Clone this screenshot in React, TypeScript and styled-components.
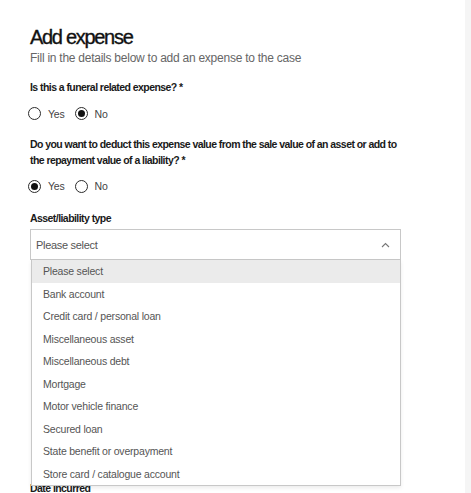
import React, { useState } from "react"
import styled, { createGlobalStyle } from "styled-components"

const GlobalStyle = createGlobalStyle`
  html, body {
    margin: 0;
    padding: 0;
    background: #ffffff;
    font-family: "Liberation Sans", Arial, sans-serif;
    color: #1a1a1a;
    overflow: hidden;
  }
`

const Page = styled.div`
  display: flex;
  width: 471px;
  height: 493px;
  overflow: hidden;
`

const Main = styled.div`
  flex: 1;
  padding: 25px 0 0 30px;
`

const Gutter = styled.div`
  width: 6px;
  background: #f5f5f5;
`

const Form = styled.div`
  width: 371px;
`

const Title = styled.h1`
  margin: 0;
  font-size: 20px;
  font-weight: 400;
  -webkit-text-stroke: 0.35px #111;
  letter-spacing: -1.3px;
  line-height: 24px;
  color: #111;
`

const Subtitle = styled.p`
  margin: 1px 0 0;
  font-size: 12px;
  line-height: 16px;
  color: #666;
  letter-spacing: -0.25px;
`

const Field = styled.div<{ $gap?: number }>`
  margin-top: ${(p) => p.$gap ?? 18}px;
`

const Label = styled.div`
  font-size: 10.5px;
  font-weight: 700;
  line-height: 15.5px;
  color: #1a1a1a;
  letter-spacing: -0.56px;
`

const RadioGroup = styled.div`
  display: flex;
  align-items: center;
  gap: 10px;
  margin-top: 11.5px;
  margin-left: -2px;
`

const RadioOption = styled.label`
  display: flex;
  align-items: center;
  gap: 7px;
  font-size: 10.5px;
  color: #444;
  letter-spacing: -0.2px;
`

const RadioCircle = styled.span<{ $checked: boolean }>`
  width: 13px;
  height: 13px;
  border-radius: 50%;
  border: 1px solid #2b2b2b;
  box-sizing: border-box;
  display: flex;
  align-items: center;
  justify-content: center;
  &::after {
    content: "";
    display: ${(p) => (p.$checked ? "block" : "none")};
    width: 7px;
    height: 7px;
    border-radius: 50%;
    background: #111;
  }
`

const SelectWrap = styled.div`
  position: relative;
  margin-top: 3px;
`

const SelectBox = styled.div`
  height: 31px;
  box-sizing: border-box;
  border: 1px solid #c8c8c8;
  display: flex;
  align-items: center;
  justify-content: space-between;
  padding: 0 10px 0 5px;
  font-size: 11px;
  color: #555;
  letter-spacing: -0.3px;
`

const Menu = styled.ul`
  position: absolute;
  top: 31px;
  left: 1px;
  right: 0;
  margin: 0;
  padding: 0;
  list-style: none;
  background: #fff;
  border: 1px solid #c8c8c8;
  border-top: none;
  box-shadow: 0 2px 4px rgba(0, 0, 0, 0.08);
  z-index: 2;
`

const MenuItem = styled.li<{ $active?: boolean }>`
  height: 22.5px;
  display: flex;
  align-items: center;
  padding-left: 11px;
  font-size: 10.5px;
  color: #555;
  letter-spacing: -0.2px;
  background: ${(p) => (p.$active ? "#ebebeb" : "transparent")};
`

const TextInput = styled.div`
  height: 30px;
  margin-top: 3px;
  border: 1px solid #c8c8c8;
  box-sizing: border-box;
`

function Chevron() {
  return (
    <svg width="9" height="6" viewBox="0 0 9 6" fill="none">
      <path d="M1 5L4.5 1.5L8 5" stroke="#777" strokeWidth="1.1" />
    </svg>
  )
}

function Radios({ value, onChange }: { value: string; onChange: (v: string) => void }) {
  return (
    <RadioGroup>
      {["Yes", "No"].map((v) => (
        <RadioOption key={v} onClick={() => onChange(v)}>
          <RadioCircle $checked={value === v} />
          {v}
        </RadioOption>
      ))}
    </RadioGroup>
  )
}

const OPTIONS = [
  "Please select",
  "Bank account",
  "Credit card / personal loan",
  "Miscellaneous asset",
  "Miscellaneous debt",
  "Mortgage",
  "Motor vehicle finance",
  "Secured loan",
  "State benefit or overpayment",
  "Store card / catalogue account",
]

export default function App() {
  const [funeral, setFuneral] = useState("No")
  const [deduct, setDeduct] = useState("Yes")

  return (
    <Page>
      <GlobalStyle />
      <Main>
        <Form>
          <Title>Add expense</Title>
          <Subtitle>Fill in the details below to add an expense to the case</Subtitle>

          <Field $gap={14}>
            <Label>Is this a funeral related expense? *</Label>
            <Radios value={funeral} onChange={setFuneral} />
          </Field>

          <Field $gap={17}>
            <Label>
              Do you want to deduct this expense value from the sale value of an asset or add to the
              repayment value of a liability? *
            </Label>
            <Radios value={deduct} onChange={setDeduct} />
          </Field>

          <Field $gap={18}>
            <Label>Asset/liability type</Label>
            <SelectWrap>
              <SelectBox>
                Please select
                <Chevron />
              </SelectBox>
              <Menu>
                {OPTIONS.map((o, i) => (
                  <MenuItem key={o} $active={i === 0}>
                    {o}
                  </MenuItem>
                ))}
              </Menu>
            </SelectWrap>
          </Field>

          <Field $gap={221}>
            <Label>Date incurred</Label>
            <TextInput />
          </Field>
        </Form>
      </Main>
      <Gutter />
    </Page>
  )
}
